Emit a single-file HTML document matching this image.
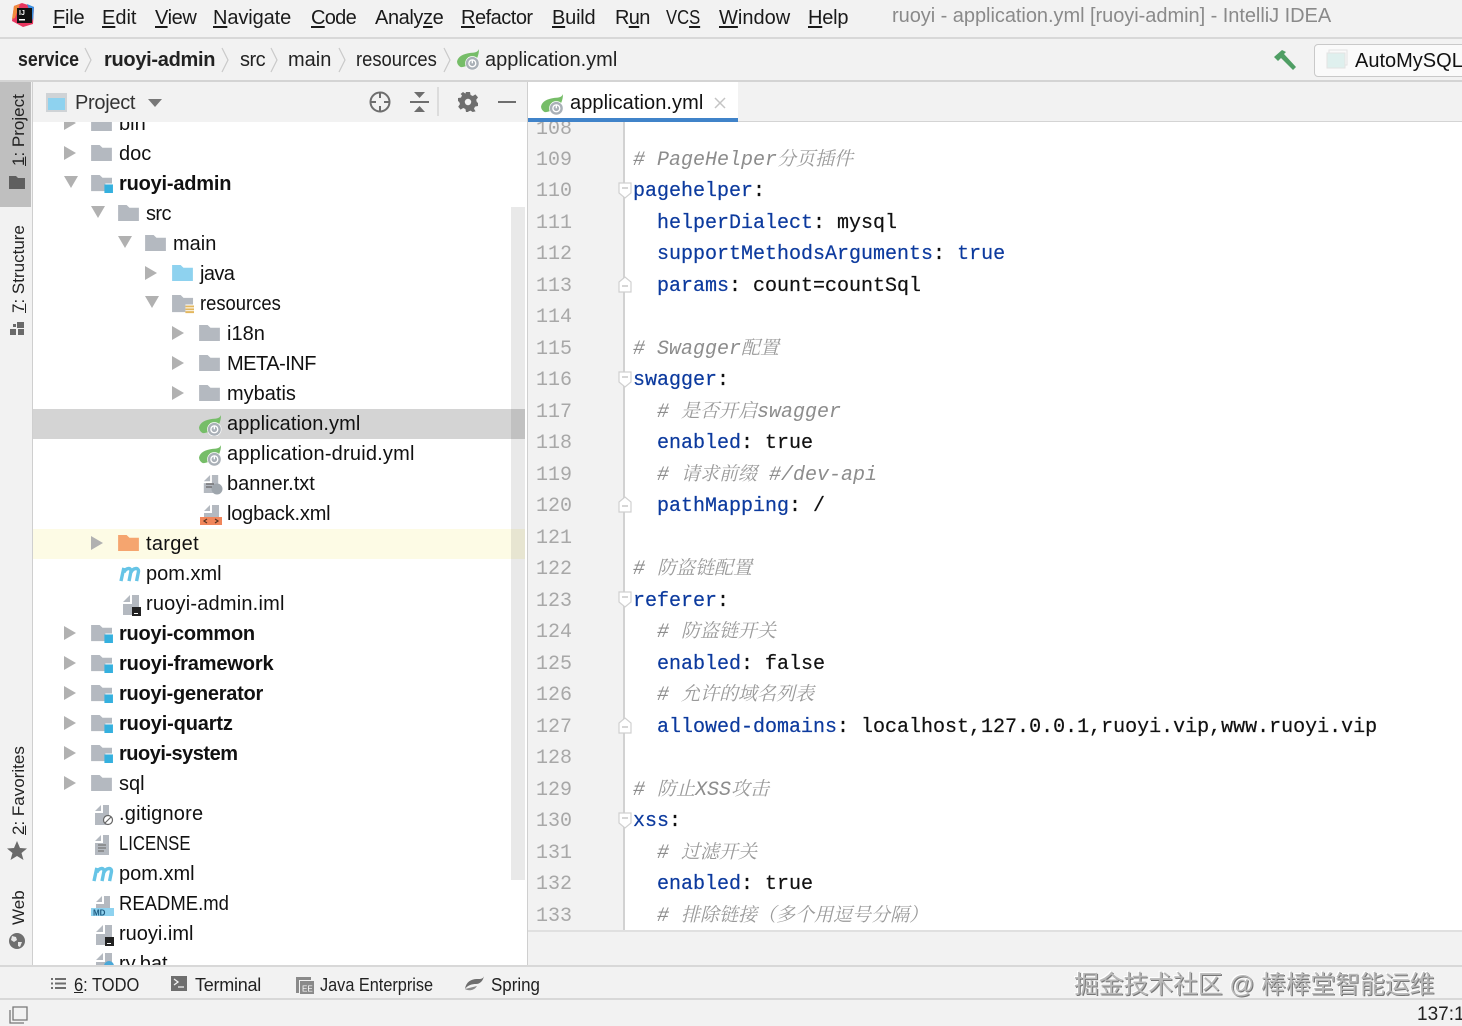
<!DOCTYPE html>
<html><head><meta charset="utf-8"><style>
html,body{margin:0;padding:0}
#r{position:relative;width:1462px;height:1026px;overflow:hidden;background:#f2f2f2;font-family:"Liberation Sans","Noto Sans CJK SC",sans-serif;color:#111}
.a{position:absolute}
.t{position:absolute;white-space:nowrap;font-size:20px;line-height:30px;height:30px}
.b{font-weight:bold}
.m{position:absolute;top:3px;font-size:20px;line-height:30px;white-space:nowrap;color:#1a1a1a}
.m u{text-underline-offset:2px}
.bc{position:absolute;top:45px;font-size:20px;line-height:30px;white-space:nowrap;color:#222}
.v{position:absolute;transform-origin:0 0;transform:rotate(-90deg);white-space:nowrap;font-size:17px;line-height:22px;color:#222}
.ln{position:absolute;left:536px;font:20px/32px "Liberation Mono",monospace;color:#a8a8a8;height:32px}
.cd{position:absolute;white-space:pre;font:20px/32px "Liberation Mono","Noto Sans CJK SC",monospace;height:32px;color:#111;-webkit-text-stroke:.2px currentColor}
.k{color:#0c3a9e}
.c{color:#8c8c8c;font-style:italic;-webkit-text-stroke:0}
.c span{font-family:"Noto Serif CJK SC",serif;font-size:19px;color:#9a9a9a}
.bt{position:absolute;top:970px;font-size:18px;line-height:30px;white-space:nowrap;color:#222}
.sx{transform-origin:0 50%}
svg{position:absolute;overflow:visible}
</style></head><body><div id="r">
<svg width="0" height="0" style="position:absolute"><defs>
<symbol id="fo" viewBox="0 0 22 18"><path d="M0 1h9l3 3h10v14H0z" fill="#b4b9c0"/></symbol>
<symbol id="bl" viewBox="0 0 22 18"><path d="M0 1h9l3 3h10v14H0z" fill="#8ed2ef"/></symbol>
<symbol id="or" viewBox="0 0 22 18"><path d="M0 1h9l3 3h10v14H0z" fill="#f5a56f"/></symbol>
<symbol id="mo" viewBox="0 0 24 20"><path d="M0 1h9l3 3h10v6h-7v8H0z" fill="#b4b9c0"/><rect x="14" y="11" width="9" height="9" fill="#35b0de"/></symbol>
<symbol id="re" viewBox="0 0 24 22"><path d="M0 1h9l3 3h10v7h-8v8H0z" fill="#b4b9c0"/><path d="M14 12h9v2h-9zM14 15h9v2h-9zM14 18h9v2h-9z" fill="#e3b75f"/></symbol>
<symbol id="ar" viewBox="0 0 12 14"><path d="M0 0l12 7L0 14z" fill="#b1b1b1"/></symbol>
<symbol id="ad" viewBox="0 0 14 12"><path d="M0 0h14L7 12z" fill="#b1b1b1"/></symbol>
<symbol id="sp" viewBox="0 0 24 22"><path d="M23 0C22 3 19 4 14 4 6 5 1 8 0 13c0 3 2 5 4 6 3 0 8-2 12-4 5-3 7-9 7-15z" fill="#76bd68"/><circle cx="16" cy="15" r="7.500" fill="#fff"/><circle cx="16" cy="15" r="6.800" fill="#a9b0b7"/><circle cx="16" cy="15" r="3.600" fill="none" stroke="#fff" stroke-width="1.400"/><path d="M16 11v4" stroke="#fff" stroke-width="1.400"/></symbol>
<symbol id="fi" viewBox="0 0 20 24"><path d="M2 9l7-7v7zM11 2h7v20H2V11h9z" fill="#b4b9c0"/></symbol>
<symbol id="m" viewBox="0 0 24 18"><path d="M3 17L6 3M6 8C8 3 14 2 13.500 7L11.500 17M13.500 8C15.500 3 22 2 21.500 7L19.500 17" fill="none" stroke="#66c4e6" stroke-width="3.600"/></symbol>
<symbol id="fold" viewBox="0 0 14 18"><path d="M1 1h12v10l-6 5-6-5z" fill="#fff" stroke="#d0d0d0" stroke-width="1.200"/><path d="M4 6h6" stroke="#bbb" stroke-width="1.200"/></symbol>
<symbol id="folu" viewBox="0 0 14 18"><path d="M1 16h12V6L7 1 1 6z" fill="#fff" stroke="#d0d0d0" stroke-width="1.200"/><path d="M4 10h6" stroke="#bbb" stroke-width="1.200"/></symbol>
</defs></svg>

<!-- title bar -->
<div class="a" style="left:0;top:37px;width:1462px;height:2px;background:#d8d8d8"></div>
<svg style="left:11px;top:3px" width="24" height="24" viewBox="0 0 24 24"><path d="M3 3l8-3 12 4-1 17-10 3-11-6z" fill="#e8365f"/><path d="M3 3l6-2-5 14-3 1z" fill="#f08a3c"/><path d="M16 1l7 3-1 14z" fill="#3a8fe0"/><rect x="6" y="5" width="15" height="15" fill="#111"/><rect x="8" y="16" width="6" height="1.500" fill="#fff"/><text x="8" y="12" font-size="7" font-weight="bold" fill="#fff" font-family="Liberation Sans">IJ</text></svg>
<div class="m" style="left:53px;letter-spacing:-.2px"><u>F</u>ile</div>
<div class="m" style="left:102px"><u>E</u>dit</div>
<div class="m" style="left:155px;letter-spacing:-.4px"><u>V</u>iew</div>
<div class="m" style="left:213px;letter-spacing:-.1px"><u>N</u>avigate</div>
<div class="m" style="left:311px;letter-spacing:-.7px"><u>C</u>ode</div>
<div class="m" style="left:375px;letter-spacing:-.4px">Analy<u>z</u>e</div>
<div class="m" style="left:461px;letter-spacing:-.5px"><u>R</u>efactor</div>
<div class="m" style="left:552px;letter-spacing:-.2px"><u>B</u>uild</div>
<div class="m" style="left:615px;letter-spacing:-.7px">R<u>u</u>n</div>
<div class="m sx" style="left:666px;transform:scaleX(.83)">VC<u>S</u></div>
<div class="m" style="left:719px"><u>W</u>indow</div>
<div class="m" style="left:808px;letter-spacing:-.2px"><u>H</u>elp</div>
<div class="m" style="left:892px;top:1px;color:#8a8a8a;letter-spacing:-.04px">ruoyi - application.yml [ruoyi-admin] - IntelliJ IDEA</div>

<!-- breadcrumb -->
<div class="bc b sx" style="left:18px;transform:scaleX(.885)">service</div>
<div class="bc b" style="left:104px;letter-spacing:-.3px">ruoyi-admin</div>
<div class="bc" style="left:240px;letter-spacing:-.5px">src</div>
<div class="bc" style="left:288px">main</div>
<div class="bc sx" style="left:356px;transform:scaleX(.92)">resources</div>
<div class="bc" style="left:485px">application.yml</div>
<svg style="left:84px;top:47px" width="8" height="26" fill="none" stroke="#c9c9c9" stroke-width="1.200"><path d="M1 1l6 12-6 12"/></svg>
<svg style="left:221px;top:47px" width="8" height="26" fill="none" stroke="#c9c9c9" stroke-width="1.200"><path d="M1 1l6 12-6 12"/></svg>
<svg style="left:270px;top:47px" width="8" height="26" fill="none" stroke="#c9c9c9" stroke-width="1.200"><path d="M1 1l6 12-6 12"/></svg>
<svg style="left:338px;top:47px" width="8" height="26" fill="none" stroke="#c9c9c9" stroke-width="1.200"><path d="M1 1l6 12-6 12"/></svg>
<svg style="left:443px;top:47px" width="8" height="26" fill="none" stroke="#c9c9c9" stroke-width="1.200"><path d="M1 1l6 12-6 12"/></svg>
<svg style="left:457px;top:49px" width="23" height="21"><use href="#sp"/></svg>
<svg style="left:1273px;top:48px" width="24" height="24" viewBox="0 0 24 24"><path d="M1 9L9 2l4 2-2 2 12 13-3 3L8 10l-3 3z" fill="#4f9e64"/></svg>
<div class="a" style="left:1314px;top:44px;width:160px;height:31px;border:1px solid #c9c9c9;border-radius:4px;background:#fafafa"></div>
<svg style="left:1326px;top:49px" width="22" height="22"><rect x="3" y="1" width="18" height="15" fill="none" stroke="#e3e3e3"/><rect x="1" y="4" width="18" height="15" fill="#dff0ee" stroke="#e3e3e3"/></svg>
<div class="bc" style="left:1355px;top:46px;color:#111">AutoMySQLI</div>
<div class="a" style="left:0;top:80px;width:1462px;height:2px;background:#d4d4d4"></div>

<!-- left strip -->
<div class="a" style="left:32px;top:82px;width:1px;height:884px;background:#cfcfcf"></div>
<div class="a" style="left:0;top:82px;width:31px;height:125px;background:#bfbfbf"></div>
<div class="v" style="left:8px;top:166px"><u>1</u>: Project</div>
<svg style="left:9px;top:176px" width="16" height="13"><path d="M0 0h7l2 2h7v11H0z" fill="#5f5f5f"/></svg>
<div class="v" style="left:8px;top:313px"><u>7</u>: Structure</div>
<svg style="left:10px;top:322px" width="15" height="14" fill="#6a6a6a"><rect x="7" y="0" width="7" height="6"/><rect x="0" y="7" width="6" height="6"/><rect x="8" y="7" width="6" height="6"/><rect x="3" y="2" width="3" height="3"/></svg>
<div class="v" style="left:8px;top:835px"><u>2</u>: Favorites</div>
<svg style="left:7px;top:841px" width="20" height="19"><path d="M10 0l3 7 7 .5-5.500 4.500 2 7L10 15l-6.500 4 2-7L0 7.500 7 7z" fill="#6a6a6a"/></svg>
<div class="v" style="left:8px;top:925px">Web</div>
<svg style="left:9px;top:933px" width="16" height="16"><circle cx="8" cy="8" r="8" fill="#6f6f6f"/><path d="M3 3l4 1 1 3-3 2-3-2zM9 9l4 0-2 5-2-1z" fill="#e8e8e8"/></svg>

<!-- project panel -->
<div class="a" style="left:33px;top:122px;width:494px;height:843px;background:#fff;overflow:hidden" id="tree">
  <div class="a" style="left:0;top:287px;width:492px;height:30px;background:#d4d4d4"></div>
  <div class="a" style="left:0;top:407px;width:492px;height:30px;background:#fdfbe5"></div>
  <div class="a" style="left:478px;top:85px;width:14px;height:673px;background:rgba(0,0,0,.085)"></div>
  <div class="t" style="left:86px;top:-13px">bin</div>
  <div class="t" style="left:86px;top:17px">doc</div>
  <div class="t b" style="left:86px;top:47px;letter-spacing:-.2px">ruoyi-admin</div>
  <div class="t" style="left:113px;top:77px;letter-spacing:-.6px">src</div>
  <div class="t" style="left:140px;top:107px">main</div>
  <div class="t" style="left:167px;top:137px;letter-spacing:-.6px">java</div>
  <div class="t sx" style="left:167px;top:167px;transform:scaleX(.92)">resources</div>
  <div class="t" style="left:194px;top:197px">i18n</div>
  <div class="t" style="left:194px;top:227px;letter-spacing:-.5px">META-INF</div>
  <div class="t" style="left:194px;top:257px">mybatis</div>
  <div class="t" style="left:194px;top:287px;letter-spacing:.07px">application.yml</div>
  <div class="t" style="left:194px;top:317px;letter-spacing:.2px">application-druid.yml</div>
  <div class="t" style="left:194px;top:347px">banner.txt</div>
  <div class="t" style="left:194px;top:377px;letter-spacing:-.2px">logback.xml</div>
  <div class="t" style="left:113px;top:407px;letter-spacing:.3px">target</div>
  <div class="t" style="left:113px;top:437px">pom.xml</div>
  <div class="t" style="left:113px;top:467px;letter-spacing:.2px">ruoyi-admin.iml</div>
  <div class="t b" style="left:86px;top:497px;letter-spacing:-.25px">ruoyi-common</div>
  <div class="t b" style="left:86px;top:527px;letter-spacing:-.15px">ruoyi-framework</div>
  <div class="t b" style="left:86px;top:557px;letter-spacing:-.25px">ruoyi-generator</div>
  <div class="t b" style="left:86px;top:587px;letter-spacing:-.15px">ruoyi-quartz</div>
  <div class="t b" style="left:86px;top:617px;letter-spacing:-.5px">ruoyi-system</div>
  <div class="t" style="left:86px;top:647px">sql</div>
  <div class="t" style="left:86px;top:677px;letter-spacing:.2px">.gitignore</div>
  <div class="t sx" style="left:86px;top:707px;transform:scaleX(.835)">LICENSE</div>
  <div class="t" style="left:86px;top:737px">pom.xml</div>
  <div class="t sx" style="left:86px;top:767px;transform:scaleX(.924)">README.md</div>
  <div class="t" style="left:86px;top:797px">ruoyi.iml</div>
  <div class="t" style="left:86px;top:827px">ry.bat</div>
  <!-- arrows -->
  <svg style="left:31px;top:-6px" width="12" height="14"><use href="#ar"/></svg>
  <svg style="left:31px;top:24px" width="12" height="14"><use href="#ar"/></svg>
  <svg style="left:31px;top:54px" width="14" height="12"><use href="#ad"/></svg>
  <svg style="left:58px;top:84px" width="14" height="12"><use href="#ad"/></svg>
  <svg style="left:85px;top:114px" width="14" height="12"><use href="#ad"/></svg>
  <svg style="left:112px;top:144px" width="12" height="14"><use href="#ar"/></svg>
  <svg style="left:112px;top:174px" width="14" height="12"><use href="#ad"/></svg>
  <svg style="left:139px;top:204px" width="12" height="14"><use href="#ar"/></svg>
  <svg style="left:139px;top:234px" width="12" height="14"><use href="#ar"/></svg>
  <svg style="left:139px;top:264px" width="12" height="14"><use href="#ar"/></svg>
  <svg style="left:58px;top:414px" width="12" height="14"><use href="#ar"/></svg>
  <svg style="left:31px;top:504px" width="12" height="14"><use href="#ar"/></svg>
  <svg style="left:31px;top:534px" width="12" height="14"><use href="#ar"/></svg>
  <svg style="left:31px;top:564px" width="12" height="14"><use href="#ar"/></svg>
  <svg style="left:31px;top:594px" width="12" height="14"><use href="#ar"/></svg>
  <svg style="left:31px;top:624px" width="12" height="14"><use href="#ar"/></svg>
  <svg style="left:31px;top:654px" width="12" height="14"><use href="#ar"/></svg>
  <!-- icons -->
  <svg style="left:58px;top:-8px" width="21" height="17"><use href="#fo"/></svg>
  <svg style="left:58px;top:22px" width="21" height="17"><use href="#fo"/></svg>
  <svg style="left:58px;top:52px" width="23" height="19"><use href="#mo"/></svg>
  <svg style="left:85px;top:82px" width="21" height="17"><use href="#fo"/></svg>
  <svg style="left:112px;top:112px" width="21" height="17"><use href="#fo"/></svg>
  <svg style="left:139px;top:142px" width="21" height="17"><use href="#bl"/></svg>
  <svg style="left:139px;top:172px" width="23" height="21"><use href="#re"/></svg>
  <svg style="left:166px;top:202px" width="21" height="17"><use href="#fo"/></svg>
  <svg style="left:166px;top:232px" width="21" height="17"><use href="#fo"/></svg>
  <svg style="left:166px;top:262px" width="21" height="17"><use href="#fo"/></svg>
  <svg style="left:166px;top:293px" width="23" height="21"><use href="#sp"/></svg>
  <svg style="left:166px;top:323px" width="23" height="21"><use href="#sp"/></svg>
  <svg style="left:169px;top:351px" width="18" height="22"><use href="#fi"/><circle cx="15" cy="16" r="5.500" fill="#9fa6ad"/><path d="M4 11h8M4 14h6" stroke="#666" stroke-width="1.200"/></svg>
  <svg style="left:167px;top:381px" width="22" height="22"><path d="M4 8l6-6v6zM12 2h7v12H4V10h8z" fill="#b4b9c0"/><rect x="0" y="14" width="22" height="8" fill="#f0855a"/><path d="M7 16l-3 2 3 2M15 16l3 2-3 2" stroke="#5a3320" stroke-width="1.200" fill="none"/></svg>
  <svg style="left:85px;top:412px" width="21" height="17"><use href="#or"/></svg>
  <svg style="left:85px;top:443px" width="23" height="17"><use href="#m"/></svg>
  <svg style="left:88px;top:471px" width="20" height="24"><use href="#fi"/><rect x="11" y="14" width="9" height="9" fill="#222"/><rect x="13" y="20" width="4" height="1" fill="#fff"/></svg>
  <svg style="left:58px;top:502px" width="23" height="19"><use href="#mo"/></svg>
  <svg style="left:58px;top:532px" width="23" height="19"><use href="#mo"/></svg>
  <svg style="left:58px;top:562px" width="23" height="19"><use href="#mo"/></svg>
  <svg style="left:58px;top:592px" width="23" height="19"><use href="#mo"/></svg>
  <svg style="left:58px;top:622px" width="23" height="19"><use href="#mo"/></svg>
  <svg style="left:58px;top:652px" width="21" height="17"><use href="#fo"/></svg>
  <svg style="left:61px;top:681px" width="20" height="23"><path d="M1 8l6-6v6zM9 2h6v20H1V10h8z" fill="#b4b9c0"/><circle cx="14" cy="17" r="4.500" fill="#fff" stroke="#666" stroke-width="1.200"/><path d="M11 20l6-6" stroke="#666" stroke-width="1.200"/></svg>
  <svg style="left:61px;top:711px" width="16" height="22"><path d="M1 8l6-6v6zM9 2h6v20H1V10h8z" fill="#b4b9c0"/><path d="M4 12h8M4 15h8M4 18h6" stroke="#777" stroke-width="1.200"/></svg>
  <svg style="left:58px;top:743px" width="23" height="17"><use href="#m"/></svg>
  <svg style="left:58px;top:771px" width="23" height="23"><path d="M5 9l6-6v6zM13 3h6v12H5v-4h8z" fill="#b4b9c0"/><rect x="0" y="15" width="23" height="8" fill="#8ed2ef"/><text x="2" y="22.500" font-size="8" font-weight="bold" fill="#1d5a80" font-family="Liberation Sans">MD</text></svg>
  <svg style="left:61px;top:801px" width="20" height="24"><use href="#fi"/><rect x="11" y="14" width="9" height="9" fill="#222"/><rect x="13" y="20" width="4" height="1" fill="#fff"/></svg>
  <svg style="left:61px;top:829px" width="20" height="24"><use href="#fi"/><circle cx="15" cy="15" r="5" fill="#4aa8d8"/></svg>
</div>
<div class="a" style="left:527px;top:82px;width:1px;height:884px;background:#cfcfcf"></div>

<!-- project header -->
<svg style="left:46px;top:93px" width="21" height="19"><rect x="0" y="0" width="21" height="19" fill="#cfd3d6"/><rect x="2" y="5" width="17" height="12" fill="#8ed2ef"/></svg>
<div class="t" style="left:75px;top:88px;color:#333;letter-spacing:-.3px">Project</div>
<svg style="left:148px;top:99px" width="14" height="9"><path d="M0 0h14L7 8z" fill="#777"/></svg>
<svg style="left:369px;top:91px" width="22" height="22" fill="none" stroke="#6e6e6e" stroke-width="2"><circle cx="11" cy="11" r="9.500"/><path d="M11 1v6M11 15v6M1 11h6M15 11h6"/></svg>
<svg style="left:410px;top:92px" width="19" height="20" fill="#6e6e6e"><path d="M4 0h11l-5.500 6zM4 20h11l-5.500-6z"/><rect x="0" y="9" width="19" height="2"/></svg>
<div class="a" style="left:437px;top:87px;width:2px;height:29px;background:#dcdcdc"></div>
<svg style="left:458px;top:92px" width="20" height="20" viewBox="0 0 20 20"><path d="M8 0h4l.6 3 2.200 1 2.600-1.600 2.600 3-1.800 2.400.6 2.200L20 11v3l-3 .6-1 2.200 1.600 2.600-3 .6-2-1.400-2 .8L10 20H8l-.6-3-2.200-1-2.600 1.600-2.400-2.800L2 12l-.8-2L0 9V6l3-.4 1-2.200L2.600 2 5 0l2.400 1.600z" fill="#6e6e6e"/><circle cx="10" cy="10" r="3.200" fill="#f2f2f2"/></svg>
<div class="a" style="left:498px;top:101px;width:18px;height:2px;background:#6e6e6e"></div>

<!-- tabs -->
<div class="a" style="left:528px;top:82px;width:210px;height:36px;background:#fff"></div>
<div class="a" style="left:528px;top:118px;width:210px;height:4px;background:#4083c9"></div>
<div class="a" style="left:738px;top:121px;width:724px;height:1px;background:#d4d4d4"></div>
<svg style="left:541px;top:94px" width="23" height="21"><use href="#sp"/></svg>
<div class="t" style="left:570px;top:88px;letter-spacing:.07px">application.yml</div>
<svg style="left:714px;top:97px" width="12" height="12" stroke="#c4c4c4" stroke-width="1.500"><path d="M1 1l10 10M11 1L1 11"/></svg>

<!-- editor -->
<div class="a" style="left:528px;top:122px;width:934px;height:808px;background:#fff;overflow:hidden">
  <div class="a" style="left:0;top:0;width:95px;height:808px;background:#f2f2f2"></div>
  <div class="a" style="left:95px;top:0;width:2px;height:808px;background:#d2d2d2"></div>
</div>
<div class="a" style="left:528px;top:930px;width:934px;height:2px;background:#e0e0e0"></div>

<div style="position:absolute;left:0;top:122px;width:1462px;height:808px;overflow:hidden">
<div class="ln" style="top:-8px">108</div>
<div class="ln" style="top:23px">109</div>
<div class="ln" style="top:54px">110</div>
<div class="ln" style="top:86px">111</div>
<div class="ln" style="top:117px">112</div>
<div class="ln" style="top:149px">113</div>
<div class="ln" style="top:180px">114</div>
<div class="ln" style="top:212px">115</div>
<div class="ln" style="top:243px">116</div>
<div class="ln" style="top:275px">117</div>
<div class="ln" style="top:306px">118</div>
<div class="ln" style="top:338px">119</div>
<div class="ln" style="top:369px">120</div>
<div class="ln" style="top:401px">121</div>
<div class="ln" style="top:432px">122</div>
<div class="ln" style="top:464px">123</div>
<div class="ln" style="top:495px">124</div>
<div class="ln" style="top:527px">125</div>
<div class="ln" style="top:558px">126</div>
<div class="ln" style="top:590px">127</div>
<div class="ln" style="top:621px">128</div>
<div class="ln" style="top:653px">129</div>
<div class="ln" style="top:684px">130</div>
<div class="ln" style="top:716px">131</div>
<div class="ln" style="top:747px">132</div>
<div class="ln" style="top:779px">133</div>

<div class="cd c" style="left:633px;top:20px"># PageHelper<span>分页插件</span></div>
<div class="cd" style="left:633px;top:54px"><span class="k">pagehelper</span>:</div>
<div class="cd" style="left:657px;top:86px"><span class="k">helperDialect</span>: mysql</div>
<div class="cd" style="left:657px;top:117px"><span class="k">supportMethodsArguments</span>: <span class="k">true</span></div>
<div class="cd" style="left:657px;top:149px"><span class="k">params</span>: count=countSql</div>
<div class="cd c" style="left:633px;top:209px"># Swagger<span>配置</span></div>
<div class="cd" style="left:633px;top:243px"><span class="k">swagger</span>:</div>
<div class="cd c" style="left:657px;top:272px"># <span>是否开启</span>swagger</div>
<div class="cd" style="left:657px;top:306px"><span class="k">enabled</span>: true</div>
<div class="cd c" style="left:657px;top:335px"># <span>请求前缀</span> #/dev-api</div>
<div class="cd" style="left:657px;top:369px"><span class="k">pathMapping</span>: /</div>
<div class="cd c" style="left:633px;top:429px"># <span>防盗链配置</span></div>
<div class="cd" style="left:633px;top:464px"><span class="k">referer</span>:</div>
<div class="cd c" style="left:657px;top:492px"># <span>防盗链开关</span></div>
<div class="cd" style="left:657px;top:527px"><span class="k">enabled</span>: false</div>
<div class="cd c" style="left:657px;top:555px"># <span>允许的域名列表</span></div>
<div class="cd" style="left:657px;top:590px"><span class="k">allowed-domains</span>: localhost,127.0.0.1,ruoyi.vip,www.ruoyi.vip</div>
<div class="cd c" style="left:633px;top:650px"># <span>防止</span>XSS<span>攻击</span></div>
<div class="cd" style="left:633px;top:684px"><span class="k">xss</span>:</div>
<div class="cd c" style="left:657px;top:713px"># <span>过滤开关</span></div>
<div class="cd" style="left:657px;top:747px"><span class="k">enabled</span>: true</div>
<div class="cd c" style="left:657px;top:776px"># <span>排除链接（多个用逗号分隔）</span></div>

<svg style="left:618px;top:60px" width="14" height="18"><use href="#fold"/></svg>
<svg style="left:618px;top:154px" width="14" height="18"><use href="#folu"/></svg>
<svg style="left:618px;top:249px" width="14" height="18"><use href="#fold"/></svg>
<svg style="left:618px;top:374px" width="14" height="18"><use href="#folu"/></svg>
<svg style="left:618px;top:469px" width="14" height="18"><use href="#fold"/></svg>
<svg style="left:618px;top:595px" width="14" height="18"><use href="#folu"/></svg>
<svg style="left:618px;top:690px" width="14" height="18"><use href="#fold"/></svg>
</div>

<!-- bottom -->
<div class="a" style="left:0;top:965px;width:1462px;height:2px;background:#d8d8d8"></div>
<div class="a" style="left:0;top:998px;width:1462px;height:2px;background:#d8d8d8"></div>
<svg style="left:51px;top:977px" width="15" height="13" fill="#6e6e6e"><path d="M0 1h2v2H0zM4 1h11v2H4zM0 5.500h2v2H0zM4 5.500h11v2H4zM0 10h2v2H0zM4 10h11v2H4z"/></svg>
<div class="bt sx" style="left:74px;transform:scaleX(.915)"><u>6</u>: TODO</div>
<svg style="left:171px;top:976px" width="16" height="15"><rect width="16" height="15" fill="#6e6e6e"/><path d="M3 3l4 3-4 3M7 11h6" stroke="#f2f2f2" stroke-width="1.300" fill="none"/></svg>
<div class="bt" style="left:195px;letter-spacing:-.25px">Terminal</div>
<svg style="left:296px;top:977px" width="18" height="17"><path d="M0 0h15v3H3v13H0z" fill="#8a8a8a"/><rect x="4" y="4" width="14" height="13" fill="#8a8a8a"/><text x="6" y="14.500" font-size="8" fill="#fff" font-family="Liberation Sans">EE</text></svg>
<div class="bt sx" style="left:320px;transform:scaleX(.904)">Java Enterprise</div>
<svg style="left:465px;top:976px" width="19" height="15"><path d="M19 0c-1 3-3 3-7 3C6 3 1 6 0 13c3-4 7-5 11-5 4 0 7-3 8-8z" fill="#6e6e6e"/><path d="M0 13c3 2 9 2 12-3" fill="#8a8a8a"/></svg>
<div class="bt sx" style="left:491px;transform:scaleX(.94)">Spring</div>
<div class="a" style="left:1074px;top:968px;font-size:25px;line-height:34px;white-space:nowrap;letter-spacing:-.25px;color:#b8b8b8;text-shadow:1px 1px 0 #777,-1px -1px 0 #fff">掘金技术社区 @ 棒棒堂智能运维</div>
<svg style="left:9px;top:1006px" width="19" height="18" fill="none" stroke="#777" stroke-width="1.300"><path d="M4 1h14v13H4zM1 4v13h14"/></svg>
<div class="a" style="left:1417px;top:1001px;font-size:19px;line-height:28px;white-space:nowrap;color:#222">137:1</div>
</div></body></html>
